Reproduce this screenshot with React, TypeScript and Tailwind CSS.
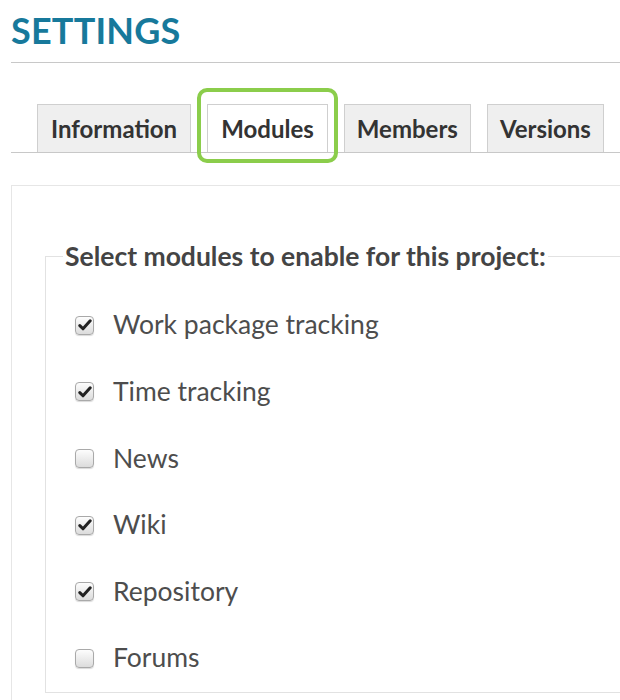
import React from "react";

const modules = [
  { label: "Work package tracking", checked: true },
  { label: "Time tracking", checked: true },
  { label: "News", checked: false },
  { label: "Wiki", checked: true },
  { label: "Repository", checked: true },
  { label: "Forums", checked: false },
];

function Box({ checked }: { checked: boolean }) {
  return (
    <span className="relative flex h-[19px] w-[19px] shrink-0 items-center justify-center rounded-[4px] border border-[#a9a9a9] bg-gradient-to-b from-[#fdfdfd] to-[#dcdcdc] shadow-[0_1px_1px_rgba(0,0,0,0.15)]">
      {checked && (
        <svg width="14" height="12" viewBox="0 0 14 12">
          <path d="M1.8 6.6 L5 9.8 L12.2 1.8" fill="none" stroke="#222" strokeWidth="3" strokeLinecap="round" strokeLinejoin="round" />
        </svg>
      )}
    </span>
  );
}

export default function App() {
  const tabs = ["Information", "Modules", "Members", "Versions"];
  return (
    <div className="h-[700px] w-[620px] overflow-hidden bg-white pl-[11px] font-['Lato','Open_Sans',sans-serif]">
      <h1 className="pt-[8px] text-[36px] font-bold leading-[44px] tracking-[0.2px] text-[#17799b]">SETTINGS</h1>
      <div className="mt-[10px] border-b border-[#c8c8c8]" />
      <div className="mt-[41px] flex gap-[16px] border-b border-[#c8c8c8] pl-[26px]">
        {tabs.map((t) => (
          <div key={t} className="relative">
            <div
              className={
                "flex h-[48px] items-center border border-b-0 border-[#cfcfcf] text-[24px] font-bold text-[#333] " +
                (t === "Modules" ? "bg-white px-[13px]" : t === "Information" ? "bg-[#efefef] px-[13px]" : "bg-[#efefef] px-[12px]")
              }
            >
              {t}
            </div>
            {t === "Modules" && (
              <div className="pointer-events-none absolute left-[-10px] right-[-10px] top-[-16px] bottom-[-11px] rounded-[10px] border-[4px] border-[#8bcd4b]" />
            )}
          </div>
        ))}
      </div>
      <div className="mt-[32px] h-[600px] w-[700px] border border-[#e6e6e6] pl-[33px] pt-[54px]">
        <fieldset className="border border-[#e2e2e2]">
          <legend className="ml-[17px] px-[2px] text-[26.5px] font-bold leading-[32px] text-[#444]">
            Select modules to enable for this project:
          </legend>
          <div className="pl-[29px] pt-[20px]">
            {modules.map((m) => (
              <label key={m.label} className="flex h-[66.6px] items-center gap-[19px] text-[26.5px] text-[#4d4d4d]">
                <Box checked={m.checked} />
                <span>{m.label}</span>
              </label>
            ))}
          </div>
        </fieldset>
      </div>
    </div>
  );
}
